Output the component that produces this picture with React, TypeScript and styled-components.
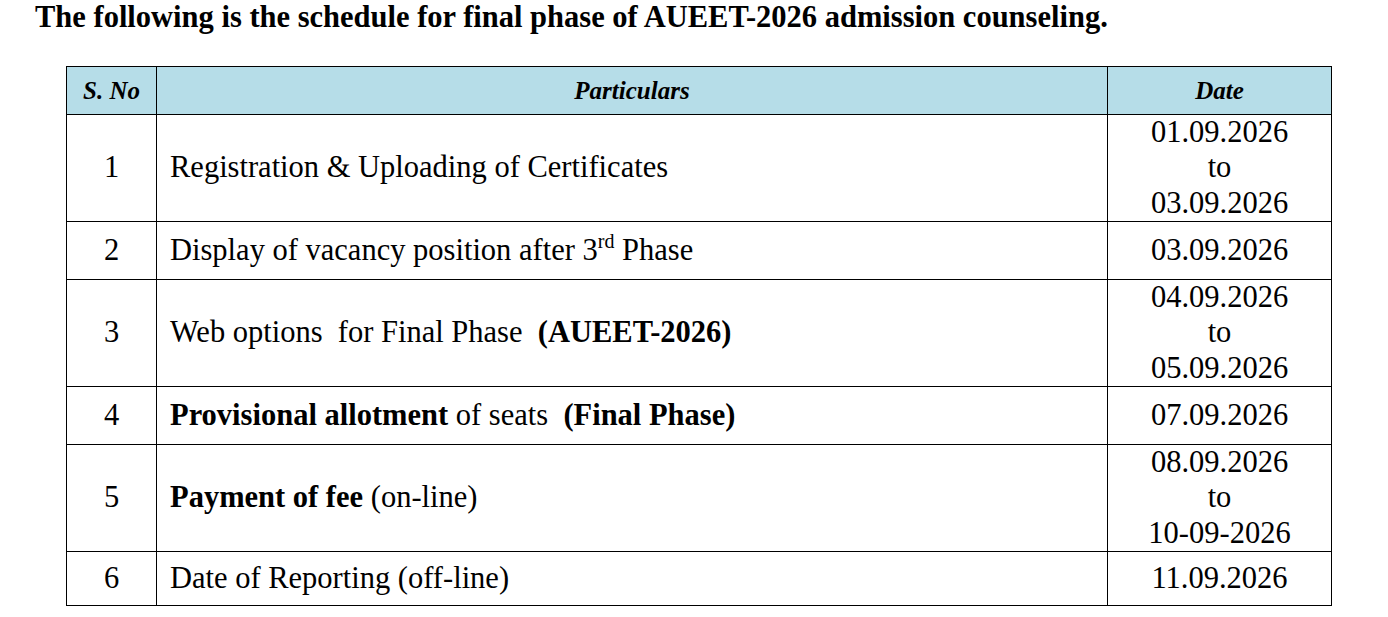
import React from "react";
import styled, { createGlobalStyle } from "styled-components";

const GlobalStyle = createGlobalStyle`
  html, body {
    margin: 0;
    padding: 0;
    background: #ffffff;
  }
  body {
    font-family: "Liberation Serif", "Times New Roman", serif;
    color: #000000;
  }
`;

const Page = styled.div`
  padding: 0 0 0 35px;
  width: 1388px;
  box-sizing: border-box;
`;

const Title = styled.h1`
  margin: 0;
  padding: 0;
  font-size: 30.5px;
  font-weight: bold;
  line-height: 35px;
  white-space: nowrap;
`;

const Table = styled.table`
  margin: 31px 0 0 31px;
  border-collapse: collapse;
  table-layout: fixed;
  width: 1262px;
`;

const Row = styled.tr<{ $h: number }>`
  height: ${(p) => p.$h}px;
`;

const HeadCell = styled.th<{ $w: number }>`
  width: ${(p) => p.$w}px;
  background: #b6dde8;
  border: 1px solid #000;
  font-size: 25px;
  font-weight: bold;
  font-style: italic;
  text-align: center;
  vertical-align: middle;
  padding: 0;
`;

const Cell = styled.td<{ $align?: "left" | "center" }>`
  border: 1px solid #000;
  font-size: 30.5px;
  text-align: ${(p) => p.$align ?? "center"};
  vertical-align: middle;
  padding: ${(p) => (p.$align === "left" ? "0 0 0 13px" : "0")};
  white-space: pre;
  line-height: 35.3px;
`;

const B = styled.b`
  font-weight: bold;
`;

const Sup = styled.sup`
  font-size: 20px;
  vertical-align: 12px;
  line-height: 0;
`;

type RowData = {
  no: string;
  h: number;
  particulars: React.ReactNode;
  date: React.ReactNode;
};

const range = (a: string, b: string) => (
  <>
    {a}
    {"\n"}to{"\n"}
    {b}
  </>
);

const rows: RowData[] = [
  {
    no: "1",
    h: 106,
    particulars: "Registration & Uploading of Certificates",
    date: range("01.09.2026", "03.09.2026"),
  },
  {
    no: "2",
    h: 58,
    particulars: (
      <>
        Display of vacancy position after 3<Sup>rd</Sup> Phase
      </>
    ),
    date: "03.09.2026",
  },
  {
    no: "3",
    h: 107,
    particulars: (
      <>
        {"Web options  for Final Phase  "}
        <B>(AUEET-2026)</B>
      </>
    ),
    date: range("04.09.2026", "05.09.2026"),
  },
  {
    no: "4",
    h: 58,
    particulars: (
      <>
        <B>Provisional allotment</B>
        {" of seats  "}
        <B>(Final Phase)</B>
      </>
    ),
    date: "07.09.2026",
  },
  {
    no: "5",
    h: 107,
    particulars: (
      <>
        <B>Payment of fee</B> (on-line)
      </>
    ),
    date: range("08.09.2026", "10-09-2026"),
  },
  {
    no: "6",
    h: 54,
    particulars: "Date of Reporting (off-line)",
    date: "11.09.2026",
  },
];

export default function App() {
  return (
    <>
      <GlobalStyle />
      <Page>
        <Title>
          The following is the schedule for final phase of AUEET-2026 admission counseling.
        </Title>
        <Table>
          <thead>
            <Row $h={48}>
              <HeadCell $w={89}>S. No</HeadCell>
              <HeadCell $w={950}>Particulars</HeadCell>
              <HeadCell $w={223}>Date</HeadCell>
            </Row>
          </thead>
          <tbody>
            {rows.map((r) => (
              <Row key={r.no} $h={r.h}>
                <Cell>{r.no}</Cell>
                <Cell $align="left">{r.particulars}</Cell>
                <Cell>{r.date}</Cell>
              </Row>
            ))}
          </tbody>
        </Table>
      </Page>
    </>
  );
}
